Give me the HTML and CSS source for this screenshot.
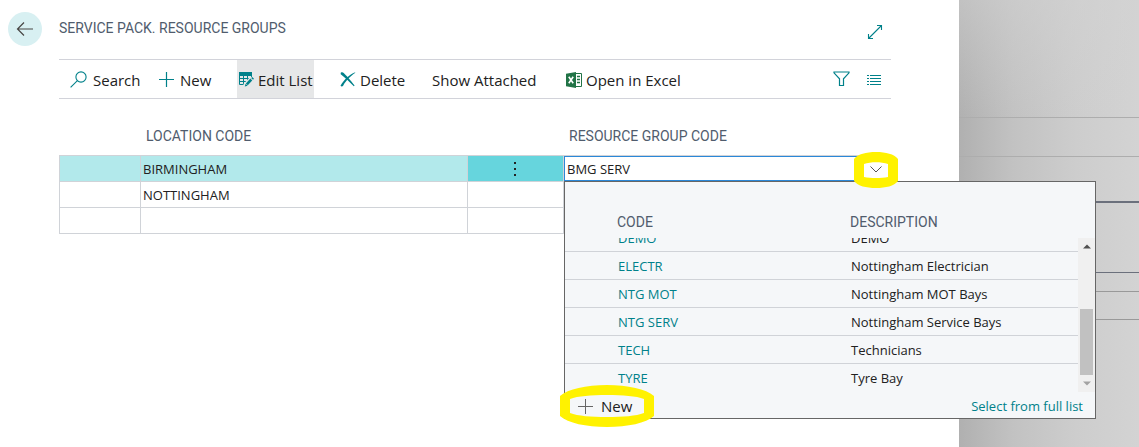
FILE: index.html
```html
<!DOCTYPE html>
<html lang="en">
<head>
<meta charset="utf-8">
<title>Service Pack. Resource Groups</title>
<link rel="stylesheet" href="styles.css">
</head>
<body>
<div class="shell">
  <main class="page">
    <header class="page-head">
      <button class="back" aria-label="Back">
        <svg width="18" height="16" viewBox="0 0 18 16" fill="none" stroke="#484644" stroke-width="1.2"><path d="M17 8H1.5M8 1.5 1.5 8 8 14.5"/></svg>
      </button>
      <h1 class="title">SERVICE PACK. RESOURCE GROUPS</h1>
      <button class="plain expand" aria-label="Expand">
        <svg width="16" height="16" viewBox="0 0 16 16" fill="none" stroke="#00818a" stroke-width="1.1"><path d="M1.5 14.5 14.5 1.5M10 1.5h4.500V6M1.500 10v4.500H6"/></svg>
      </button>
    </header>

    <div class="toolbar" role="toolbar">
      <button class="tool search">
        <svg width="17" height="17" viewBox="0 0 17 17" fill="none" stroke="#00818a" stroke-width="1.100"><circle cx="11" cy="6" r="5.100"/><path d="M7.400 9.600.6 16.400"/></svg>
        Search</button>
      <button class="tool">
        <svg width="15" height="15" viewBox="0 0 15 15" stroke="#00818a" stroke-width="1.200"><path d="M7.500 0v15M0 7.500h15"/></svg>
        New</button>
      <button class="tool tight active">
        <svg width="15" height="15" viewBox="0 0 15 15" fill="none" stroke="#00818a"><path d="M.5 3v9.500H7M0 6.500h13M0 9.500h9M4.500 3v9.500M8.500 3v7M12.500 3v2"/><path d="M0 0h13v4H0z" fill="#00818a" stroke="none"/><path d="m6 14 7.500-8" stroke="#e6e7e8" stroke-width="5"/><path d="m7.800 12.300 4.500-4.800" stroke-width="2.600"/><path d="m5.800 14.500.8-2.700 2 1.900zM12.200 5.900l1-1 1.800 1.800-1 1z" fill="#00818a" stroke="none"/></svg>
        Edit List</button>
      <button class="tool tight">
        <svg width="16" height="15" viewBox="0 0 16 15" fill="#00818a"><path d="M.7.8C1.800 0 3 .3 3.700 1 6 3 11 8.800 14.600 13.400l-.8.800C10 10.500 5 5.500.7 2.300z"/><path d="M15.500.8C11 3.500 6 8.500 3 13.900c-.8.800-2 .5-2.500-.2C4 8 9 2.800 14.500.5z"/></svg>
        Delete</button>
      <button class="tool">Show Attached</button>
      <button class="tool tight">
        <svg width="16" height="16" viewBox="0 0 16 16"><path d="M9 1.500h6.500v13H9z" fill="#fff" stroke="#217346"/><path d="M0 1.800 10 0v16L0 14.200z" fill="#217346"/><path d="M11 4.500h3M11 7.500h3M11 10.500h3" stroke="#217346" stroke-width="1.500"/><path d="m2.800 4.800 4.400 6.500M7.200 4.800l-4.400 6.500" stroke="#fff" stroke-width="1.600"/></svg>
        Open in Excel</button>
      <div class="views">
        <button class="plain" aria-label="Filter">
          <svg width="17" height="16" viewBox="0 0 17 16" fill="none" stroke="#00818a"><path d="M1 1h15v.8l-5.500 6V14.500h-4V7.800L1 1.800z" stroke-width="1.200"/></svg>
        </button>
        <button class="plain" aria-label="List view">
          <svg width="14" height="12" viewBox="0 0 14 12" stroke="#00818a"><path d="M0 1.500h2M3 1.500h11M0 4.500h2M3 4.500h11M0 7.500h2M3 7.500h11M0 10.500h2M3 10.500h11"/></svg>
        </button>
      </div>
    </div>

    <table class="grid">
      <colgroup><col class="c-mark"><col class="c-loc"><col class="c-menu"><col></colgroup>
      <thead>
        <tr><th></th><th scope="col">LOCATION CODE</th><th></th><th scope="col" id="group-label">RESOURCE GROUP CODE</th></tr>
      </thead>
      <tbody>
        <tr class="selected">
          <td></td>
          <td>BIRMINGHAM</td>
          <td class="menu"><button class="plain more" aria-label="Row actions"><svg width="3" height="14" viewBox="0 0 3 14" fill="#222"><path d="M0 0h2v2H0zM0 6h2v2H0zM0 12h2v2H0z"/></svg></button></td>
          <td class="lookup">
            <div class="field">
              <input class="value" type="text" value="BMG SERV" aria-labelledby="group-label">
              <button class="plain toggle" aria-label="Choose a value"><svg width="12" height="7" viewBox="0 0 12 7" fill="none" stroke="#555"><path d="m.5.5 5.500 5.500L11.500.5"/></svg></button>
            </div>
            <div class="dropdown">
              <div class="drop-head"><span>CODE</span><span>DESCRIPTION</span></div>
              <div class="drop-body">
                <table class="options">
                  <colgroup><col class="o-code"><col class="o-gap"><col></colgroup>
                  <tbody>
                    <tr><td><a href="#">DEMO</a></td><td></td><td>DEMO</td></tr>
                    <tr><td><a href="#">ELECTR</a></td><td></td><td>Nottingham Electrician</td></tr>
                    <tr><td><a href="#">NTG MOT</a></td><td></td><td>Nottingham MOT Bays</td></tr>
                    <tr><td><a href="#">NTG SERV</a></td><td></td><td>Nottingham Service Bays</td></tr>
                    <tr><td><a href="#">TECH</a></td><td></td><td>Technicians</td></tr>
                    <tr><td><a href="#">TYRE</a></td><td></td><td>Tyre Bay</td></tr>
                  </tbody>
                </table>
                <div class="scrollbar">
                  <svg width="8" height="5" viewBox="0 0 8 5" fill="#505050"><path d="M0 4.500 4 .5l4 4z"/></svg>
                  <div class="thumb"></div>
                  <svg width="8" height="5" viewBox="0 0 8 5" fill="#a3a3a3"><path d="M0 .5h8l-4 4z"/></svg>
                </div>
              </div>
              <div class="drop-foot">
                <button class="plain new"><svg width="15" height="15" viewBox="0 0 15 15" stroke="#666"><path d="M7.500 0v15M0 7.500h15"/></svg>New</button>
                <a href="#">Select from full list</a>
              </div>
              <svg class="ring ring-new" width="94" height="42" viewBox="0 0 94 42" fill="#fff200" fill-rule="evenodd"><path d="M0 11C8 4 26 0 47 0s39 4 47 11v20c-8 7-26 11-47 11S8 38 0 31zM10 14v14c8 3 21 4 37 4s29-1 37-4V14c-8-3-21-4-37-4s-29 1-37 4z"/></svg>
            </div>
            <svg class="ring ring-toggle" width="44" height="36" viewBox="0 0 44 36" fill="#fff200" fill-rule="evenodd"><path d="M0 7C4 2 12 0 22 0s18 2 22 7v22c-4 5-12 7-22 7S4 34 0 29zM10 12v13c7 1.400 17 1.400 24 0V12c-7-2.400-17-2.400-24 0z"/></svg>
          </td>
        </tr>
        <tr><td></td><td>NOTTINGHAM</td><td></td><td></td></tr>
        <tr><td></td><td></td><td></td><td></td></tr>
      </tbody>
    </table>
  </main>
  <aside class="backdrop">
    <div class="band band-top"></div>
    <div class="band band-title"></div>
    <div class="band band-head"></div>
    <div class="band band-row"></div>
    <div class="band band-sub"></div>
    <div class="band band-line"></div>
  </aside>
</div>
</body>
</html>
```
FILE: styles.css
```css
* { box-sizing: border-box; }

body {
  margin: 0;
  background: #fff;
  color: #212121;
  font: 13px/18px "Open Sans", "Noto Sans", sans-serif;
}

button, input { font: inherit; color: inherit; }
a { color: #00818a; text-decoration: none; }
svg { display: block; flex: none; }

.shell { display: flex; min-height: 100vh; overflow: hidden; }
.page { flex: 1; min-width: 0; }

.plain, .tool, .back { border: 0; padding: 0; background: none; }

.page-head {
  display: flex;
  align-items: center;
  gap: 17px;
  height: 59px;
  padding: 0 76px 2px 8px;
}
.back {
  display: grid;
  place-items: center;
  width: 34px;
  height: 34px;
  border-radius: 50%;
  background: #d8f0f2;
}
.title, th, .drop-head {
  color: #505c6d;
  font: 400 14px/18px Roboto, sans-serif;
}
.title { flex: 1; margin: 0; padding-bottom: 2px; }
.expand { margin-top: 6px; }

.toolbar {
  display: grid;
  grid-template-columns: 100px 78px 103px 92px 134px auto 1fr;
  align-items: center;
  height: 40px;
  margin: 0 68px 0 59px;
  border: solid #d2d3da;
  border-width: 1px 0;
}
.tool {
  display: flex;
  align-items: center;
  gap: 6px;
  height: 38px;
  padding-top: 1px;
  font-size: 15px;
  white-space: nowrap;
}
.tight { gap: 4px; }
.search { padding-left: 11px; }
.active { justify-self: start; padding-left: 2px; padding-right: 1px; background: #e6e7e8; }
.views { display: flex; justify-content: flex-end; align-items: center; gap: 17px; padding-right: 10px; }
.views button:last-child { padding-top: 2px; }

.grid {
  width: calc(100% - 127px);
  margin-left: 59px;
  table-layout: fixed;
  border-collapse: separate;
  border-spacing: 0;
}
.c-mark { width: 81px; }
.c-loc { width: 327px; }
.c-menu { width: 96px; }
.grid th { height: 56px; padding: 18px 0 0 6px; text-align: left; }
.grid > tbody > tr > td { height: 26px; padding: 0 0 0 2px; border: solid #d0d3d8; border-width: 1px 0 0 1px; }
.grid > tbody > tr:last-child > td { height: 27px; border-bottom-width: 1px; }
.grid > tbody > .selected > td { background: #b2e9eb; }
.grid > tbody > .selected > .menu { padding: 0; background: #66d5dd; }
.more { display: block; margin: 0 auto; }

.grid > tbody > .selected > .lookup { position: relative; padding: 0; background: #fff; }
.field { display: flex; align-items: center; height: 25px; border: 1px solid #2b88d8; background: #fff; }
.value { flex: 1; min-width: 0; height: 22px; padding: 0 2px; border: 0; outline: 0; background: none; }
.toggle { padding: 6px 8px 4px; }

.dropdown {
  position: absolute;
  z-index: 1;
  top: 25px;
  left: 0;
  width: 532px;
  border: 1px solid #666;
  background: #f5f7f9;
}
.drop-head { display: grid; grid-template-columns: 233px 1fr; height: 56px; padding: 31px 0 0 52px; }
.drop-body { display: flex; align-items: flex-end; height: 154px; overflow: hidden; }
.options { flex: 1; margin-bottom: 1px; table-layout: fixed; border-spacing: 0; }
.o-code { width: 222px; }
.o-gap { width: 58px; }
.options td { height: 28px; padding: 0 0 0 6px; border-top: 1px solid #d0d3d8; }
.options td:first-child { padding-left: 53px; }

.scrollbar {
  display: flex;
  flex-direction: column;
  align-items: center;
  justify-content: flex-end;
  gap: 6px;
  width: 17px;
  height: 154px;
  padding: 6px 0;
  background: #f0f0f0;
}
.scrollbar svg:first-child { margin-bottom: auto; }
.thumb { width: 13px; height: 66px; background: #c1c1c1; }

.drop-foot { display: flex; justify-content: space-between; align-items: center; height: 26px; padding: 2px 12px 0 13px; }
.new { display: flex; align-items: center; gap: 8px; font-size: 15px; }

.ring { position: absolute; z-index: 2; pointer-events: none; }
.ring-new { left: -5px; bottom: -9px; }
.ring-toggle { right: -7px; top: -4px; }

.backdrop {
  width: 180px;
  background:
    linear-gradient(to bottom, rgba(211, 211, 211, 0.5), rgba(211, 211, 211, 0) 120px),
    linear-gradient(to right, #b0b0b0, #c2c2c2 30%, #cdcdcd 65%, #d3d3d3);
}
.band { border-bottom: 1px solid #adadad; }
.band-top { height: 118px; }
.band-title { height: 39px; }
.band-head { height: 46px; border-bottom: 2px solid #6b707c; }
.band-row { height: 70px; border-bottom-color: #6b707c; }
.band-sub { height: 19px; border-bottom-color: #999; }
.band-line { height: 28px; border-bottom-color: #999; }
```
